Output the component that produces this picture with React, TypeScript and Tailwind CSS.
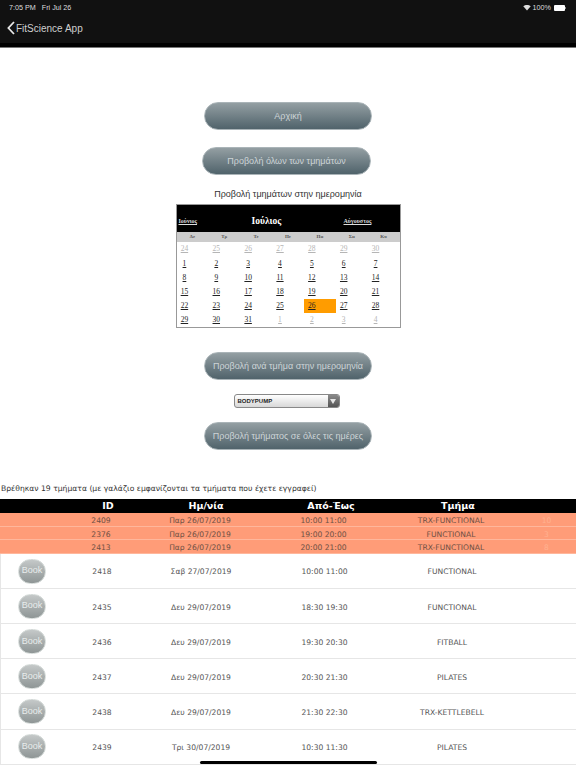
import React from "react";

const serif = "font-['Liberation_Serif',serif]";
const sans = "font-['Liberation_Sans',sans-serif]";

function Btn({ label, w = "w-[168px]" }: { label: string; w?: string }) {
  return (
    <div className={`${w} h-[28px] pt-[1px] rounded-[14px] bg-gradient-to-b from-[#949fa3] to-[#50636b] border border-[#aab4b8] flex items-center justify-center whitespace-nowrap text-[9px] font-light text-[#cdd4d7] ${sans}`}>
      {label}
    </div>
  );
}

const days = [
  "24", "25", "26", "27", "28", "29", "30",
  "1", "2", "3", "4", "5", "6", "7",
  "8", "9", "10", "11", "12", "13", "14",
  "15", "16", "17", "18", "19", "20", "21",
  "22", "23", "24", "25", "26", "27", "28",
  "29", "30", "31", "1", "2", "3", "4",
];

function Calendar() {
  return (
    <div className={`w-[225px] h-[124px] border border-[#999999] flex flex-col bg-white ${serif}`}>
      <div className="h-[28px] bg-black text-white flex items-center pt-[6px] pl-[2px]">
        <span className="w-[73px] text-[6px] font-bold underline text-[#dddddd]">Ιούνιος</span>
        <span className="w-[92px] text-[9.5px] font-bold">Ιούλιος</span>
        <span className="text-[6px] font-bold underline text-[#dddddd]">Αύγουστος</span>
      </div>
      <div className="h-[10px] bg-[#cccccc] grid grid-cols-7 items-center text-center text-[5px] font-bold text-[#555555]">
        {["Δε", "Τρ", "Τε", "Πε", "Πα", "Σα", "Κυ"].map((d) => (
          <span key={d}>{d}</span>
        ))}
      </div>
      <div className="grid grid-cols-7">
        {days.map((d, i) => {
          const muted = i < 7 || i > 37;
          const today = i === 32;
          return (
            <div
              key={i}
              className={`h-[14.2px] pr-[16px] flex items-center justify-center text-[7.5px] underline ${muted ? "text-[#b5b5b5]" : "text-[#222222]"} ${today ? "bg-[#ff9c00]" : ""}`}
            >
              {d}
            </div>
          );
        })}
      </div>
    </div>
  );
}

const headCols = "grid grid-cols-[64px_88px_108px_142px_112px_62px] items-center text-center";
const cols = "grid grid-cols-[64px_74px_124px_123px_132px_59px] items-center text-center";

const orange = [
  ["2409", "Παρ 26/07/2019", "10:00 11:00", "TRX-FUNCTIONAL", "10"],
  ["2376", "Παρ 26/07/2019", "19:00 20:00", "FUNCTIONAL", "3"],
  ["2413", "Παρ 26/07/2019", "20:00 21:00", "TRX-FUNCTIONAL", "8"],
];
const rows = [
  ["2418", "Σαβ 27/07/2019", "10:00 11:00", "FUNCTIONAL"],
  ["2435", "Δευ 29/07/2019", "18:30 19:30", "FUNCTIONAL"],
  ["2436", "Δευ 29/07/2019", "19:30 20:30", "FITBALL"],
  ["2437", "Δευ 29/07/2019", "20:30 21:30", "PILATES"],
  ["2438", "Δευ 29/07/2019", "21:30 22:30", "TRX-KETTLEBELL"],
  ["2439", "Τρι 30/07/2019", "10:30 11:30", "PILATES"],
];

export default function App() {
  return (
    <div className={`w-[576px] h-[768px] overflow-hidden bg-white relative ${sans}`}>
      <header className="h-[48px] bg-black border-b border-[#777777] flex flex-col">
        <div className="h-[43px] bg-[#111111] text-[#dddddd]">
          <div className="h-[15px] pl-[9px] pr-[10px] flex items-center justify-between text-[7.2px] pt-[1px]">
            <span className="flex gap-[6px]">
              <span>7:05 PM</span>
              <span>Fri Jul 26</span>
            </span>
            <span className="flex items-center gap-[2px]">
              <svg width="8" height="7" viewBox="0 0 16 12" fill="#dddddd">
                <path d="M8 12 L0.5 3.6 C4.6 0 11.4 0 15.5 3.6 Z" />
              </svg>
              <span>100%</span>
              <span className="flex items-center ml-[1px]">
                <span className="w-[11px] h-[5.5px] rounded-[1px] bg-white" />
                <span className="w-[1px] h-[2px] bg-[#888888]" />
              </span>
            </span>
          </div>
          <div className="h-[25px] pt-[1px] flex items-center pl-[7px] gap-[1px] text-[10px] text-[#cfcfcf]">
            <svg width="8" height="14" viewBox="0 0 8 14" fill="none" stroke="#e8e8e8" strokeWidth="1.8">
              <path d="M7 1 L1.4 7 L7 13" />
            </svg>
            <span>FitScience App</span>
          </div>
        </div>
      </header>

      <main className="flex flex-col items-center">
        <div className="mt-[54px]">
          <Btn label="Αρχική" />
        </div>
        <div className="mt-[17px] mr-[3px]">
          <Btn label="Προβολή όλων των τμημάτων" w="w-[169px]" />
        </div>
        <p className="mt-[13px] h-[12px] leading-[12px] text-[9px] text-[#333333]">Προβολή τμημάτων στην ημερομηνία</p>
        <div className="mt-[4px]">
          <Calendar />
        </div>
        <div className="mt-[24px]">
          <Btn label="Προβολή ανά τμήμα στην ημερομηνία" />
        </div>
        <div className="mt-[14px] mr-[3px] w-[106px] h-[14px] rounded-[3px] border border-[#888888] flex overflow-hidden bg-gradient-to-b from-white to-[#d8d8d8]">
          <span className="flex-1 pl-[3px] text-[6px] leading-[12px] text-[#222222] font-bold">BODYPUMP</span>
          <span className="w-[11px] bg-gradient-to-b from-[#8a8a8a] to-[#555555] flex items-center justify-center">
            <svg width="6" height="5" viewBox="0 0 6 5" fill="#e6e6e6">
              <path d="M0 0 H6 L3 5 Z" />
            </svg>
          </span>
        </div>
        <div className="mt-[14px]">
          <Btn label="Προβολή τμήματος σε όλες τις ημέρες" />
        </div>
      </main>

      <p className="mt-[33px] pl-[1px] h-[12px] leading-[12px] text-[7.65px] text-[#333333] whitespace-nowrap font-['DejaVu_Sans',sans-serif]">
        Βρέθηκαν 19 τμήματα (με γαλάζιο εμφανίζονται τα τμήματα που έχετε εγγραφεί)
      </p>

      <section className="mt-[4px] font-['DejaVu_Sans',sans-serif] text-[7.6px] text-[#555555]">
        <div className={`${headCols} h-[14px] bg-black text-white font-bold text-[9.5px]`}>
          <span />
          <span>ID</span>
          <span>Ημ/νία</span>
          <span>Από-Έως</span>
          <span>Τμήμα</span>
          <span />
        </div>
        {orange.map((r) => (
          <div key={r[0]} className={`${cols} h-[13.7px] pt-[2px] bg-[#ff9c78] border-b border-[#ffb79c] text-[#6e5044]`}>
            <span />
            <span>{r[0]}</span>
            <span>{r[1]}</span>
            <span>{r[2]}</span>
            <span>{r[3]}</span>
            <span className="text-[#ffb190]">{r[4]}</span>
          </div>
        ))}
        {rows.map((r) => (
          <div key={r[0]} className={`${cols} h-[35.1px] border-b border-[#e6e6e6] border-l`}>
            <span className="flex pl-[17px]">
              <span className={`w-[28px] h-[25px] rounded-full bg-gradient-to-b from-[#c4c8c8] to-[#8f9696] border border-[#d4dad8] flex items-center justify-center text-[9px] text-[#e8ecec] ${sans}`}>
                Book
              </span>
            </span>
            <span className="pt-[2px]">{r[0]}</span>
            <span className="pt-[2px]">{r[1]}</span>
            <span className="pt-[2px]">{r[2]}</span>
            <span className="pt-[2px]">{r[3]}</span>
            <span />
          </div>
        ))}
      </section>

      <div className="absolute left-[200px] bottom-[4px] w-[177px] h-[3px] rounded-full bg-black" />
    </div>
  );
}
